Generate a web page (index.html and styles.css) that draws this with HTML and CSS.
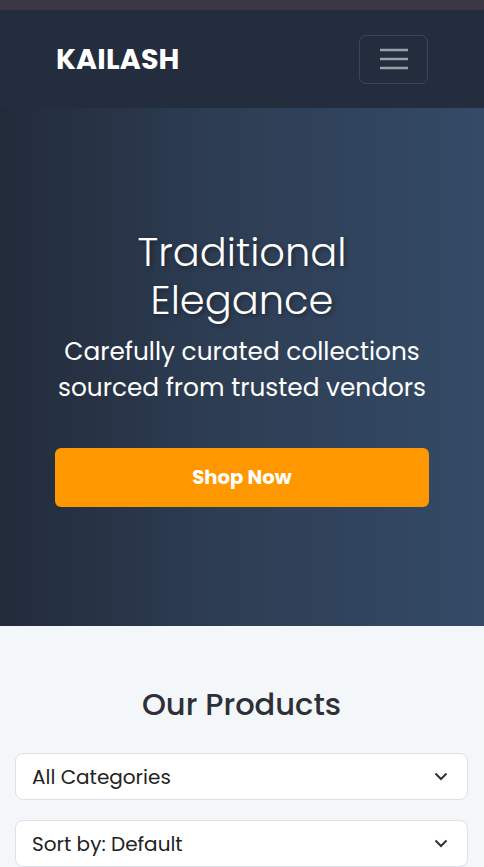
FILE: index.html
```html
<!DOCTYPE html>
<html lang="en">
<head>
<meta charset="utf-8">
<title>Kailash</title>
<link rel="stylesheet" href="styles.css">
</head>
<body>
<div class="topbar"></div>
<header class="navbar">
  <div class="brand">KAILASH</div>
  <button class="toggler" aria-label="Menu">
    <svg width="30" height="22" viewBox="0 0 30 22"><path d="M1 2h28M1 11h28M1 20h28" stroke="#9aa0a8" stroke-width="2.4" stroke-linecap="butt"/></svg>
  </button>
</header>
<section class="hero">
  <h1 class="hero-title">Traditional<br>Elegance</h1>
  <p class="hero-sub">Carefully curated collections sourced from trusted vendors</p>
  <a class="btn-shop" href="#">Shop Now</a>
</section>
<section class="products">
  <h2 class="section-title">Our Products</h2>
  <div class="select"><span>All Categories</span><svg width="14" height="9" viewBox="0 0 14 9"><path d="M1.5 1.5l5.5 5.5 5.5-5.5" fill="none" stroke="#333" stroke-width="2"/></svg></div>
  <div class="select"><span>Sort by: Default</span><svg width="14" height="9" viewBox="0 0 14 9"><path d="M1.5 1.5l5.5 5.5 5.5-5.5" fill="none" stroke="#333" stroke-width="2"/></svg></div>
</section>
</body>
</html>
```
FILE: styles.css
```css
* { box-sizing: border-box; }
html, body { margin: 0; padding: 0; }
body {
  font-family: "Poppins", "Open Sans", "Noto Sans", sans-serif;
  background: #f4f7fa;
  overflow: hidden;
}
.topbar { height: 10px; background: #3c3747; }
.navbar {
  height: 98px;
  background: #232d3d;
  display: flex;
  align-items: center;
  justify-content: space-between;
  padding: 0 56px 0 56px;
}
.brand {
  color: #fff;
  font-weight: 700;
  font-size: 28.5px;
  letter-spacing: 0.2px;
}
.toggler {
  width: 69px;
  height: 49px;
  background: transparent;
  border: 1px solid rgba(255,255,255,0.12);
  border-radius: 7px;
  display: flex;
  align-items: center;
  justify-content: center;
  padding: 0;
}
.hero {
  height: 518px;
  background: linear-gradient(90deg, #222b3a 0%, #2d3d53 45%, #344a66 100%);
  display: flex;
  flex-direction: column;
  align-items: center;
  justify-content: center;
  padding: 0 55px;
  text-align: center;
  color: #fff;
}
.hero-title {
  margin: 0;
  font-weight: 300;
  font-size: 40px;
  line-height: 48px;
  text-shadow: 2px 2px 4px rgba(0,0,0,0.35);
}
.hero-sub {
  margin: 10px -10px 0;
  font-weight: 400;
  font-size: 24.8px;
  line-height: 36px;
}
.btn-shop {
  margin-top: 42px;
  width: 100%;
  height: 59px;
  background: #ff9800;
  border-radius: 6px;
  color: #fff;
  text-decoration: none;
  font-weight: 700;
  font-size: 19.6px;
  display: flex;
  align-items: center;
  justify-content: center;
}
.products {
  padding: 57px 16px 0 15px;
}
.section-title {
  margin: 0 0 26px;
  text-align: center;
  font-weight: 500;
  font-size: 30.5px;
  line-height: 44px;
  color: #2d3037;
}
.select {
  height: 47px;
  background: #fff;
  border: 1px solid #dde1e6;
  border-radius: 8px;
  display: flex;
  align-items: center;
  justify-content: space-between;
  padding: 0 19px 0 16px;
  font-size: 20px;
  color: #222;
  margin-bottom: 20px;
}
```
